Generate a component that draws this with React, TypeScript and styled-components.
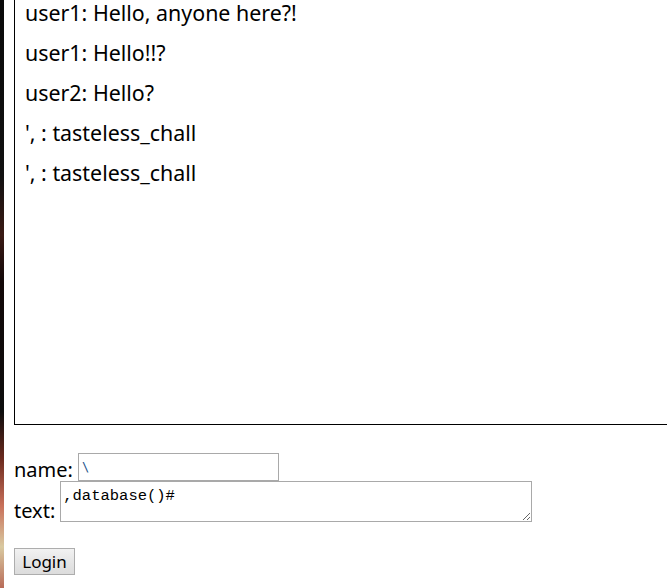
import styled, { createGlobalStyle } from "styled-components";

const messages = [
  "user1: Hello, anyone here?!",
  "user1: Hello!!?",
  "user2: Hello?",
  "', : tasteless_chall",
  "', : tasteless_chall",
];

const GlobalStyle = createGlobalStyle`
  html, body {
    margin: 0;
    padding: 0;
    background: #ffffff;
    overflow: hidden;
  }
`;

const Page = styled.div`
  display: flex;
  width: 667px;
  height: 588px;
  overflow: hidden;
`;

const Edge = styled.div`
  flex: 0 0 4px;
  background: linear-gradient(
    180deg,
    #0a0a0a 0%,
    #111 30%,
    #3a1a14 40%,
    #120808 48%,
    #0d0d0d 70%,
    #6b2a1e 78%,
    #c8705a 86%,
    #d9c9a0 93%,
    #b86b58 100%
  );
`;

const Content = styled.div`
  flex: 1;
  padding-left: 10px;
  font-family: "Noto Sans", "Open Sans", sans-serif;
  color: #000;
`;

const ChatBox = styled.div`
  margin-top: -14px;
  width: 720px;
  height: 439px;
  border: 1px solid #000;
  padding: 13px 10px 0;
  box-sizing: border-box;
  display: flex;
  flex-direction: column;
  gap: 14px;
`;

const Message = styled.p`
  margin: 0;
  font-size: 21.4px;
  line-height: 26px;
  white-space: nowrap;
`;

const Form = styled.form`
  margin-top: 28px;
  font-size: 20px;
`;

const Row = styled.div`
  display: flex;
  align-items: flex-end;
  gap: 5px;
`;

const Label = styled.label`
  line-height: 22px;
`;

const NameInput = styled.input`
  width: 201px;
  height: 28px;
  box-sizing: border-box;
  border: 1px solid #a9a9a9;
  padding: 2px 3px;
  font-family: "DejaVu Sans Mono", monospace;
  font-size: 12px;
  color: #1a4f8a;
  outline: none;
`;

const TextArea = styled.textarea`
  width: 472px;
  height: 41px;
  box-sizing: border-box;
  border: 1px solid #a9a9a9;
  padding: 5px 2px 2px;
  font-family: "Liberation Mono", monospace;
  font-size: 15.5px;
  line-height: 18px;
  margin: 0;
  outline: none;
`;

const LoginButton = styled.button`
  margin-top: 26px;
  width: 61px;
  height: 27px;
  border: 1px solid #adadad;
  border-radius: 0;
  background: linear-gradient(180deg, #f2f2f2 0%, #e6e6e6 50%, #dcdcdc 100%);
  font-family: "Noto Sans", "Open Sans", sans-serif;
  font-size: 17px;
  color: #000;
  padding: 0;
`;

export default function App() {
  return (
    <>
      <GlobalStyle />
      <Page>
        <Edge />
        <Content>
          <ChatBox>
            {messages.map((m, i) => (
              <Message key={i}>{m}</Message>
            ))}
          </ChatBox>
          <Form onSubmit={(e) => e.preventDefault()}>
            <Row>
              <Label>name:</Label>
              <NameInput defaultValue="\" />
            </Row>
            <Row>
              <Label>text:</Label>
              <TextArea defaultValue=",database()#" />
            </Row>
            <LoginButton type="submit">Login</LoginButton>
          </Form>
        </Content>
      </Page>
    </>
  );
}
